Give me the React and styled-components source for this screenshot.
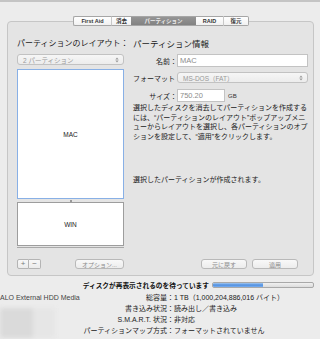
import React from "react"
import styled, { createGlobalStyle } from "styled-components"

/* Global page reset */
const GlobalStyle = createGlobalStyle`
  html, body {
    margin: 0;
    padding: 0;
  }
  body {
    width: 320px;
    height: 339px;
    overflow: hidden;
    background: #ececec;
    font-family: "Liberation Sans", "Noto Sans CJK JP", sans-serif;
    color: #222;
  }
`

const Window = styled.div`
  width: 320px;
  height: 339px;
  box-sizing: border-box;
  border-top: 2px solid #c4c4c4;
  padding-top: 14px;
  display: flex;
  flex-direction: column;
`

/* Tabs */
const TabStrip = styled.div`
  display: flex;
  margin-left: 73px;
  height: 10px;
  margin-bottom: -5px;
  position: relative;
  z-index: 1;
`

const Tab = styled.div`
  width: ${(p) => p.w}px;
  height: 10px;
  box-sizing: border-box;
  display: flex;
  align-items: center;
  justify-content: center;
  font-size: 5.5px;
  font-weight: bold;
  color: ${(p) => (p.active ? "#eeeeee" : "#333")};
  background: ${(p) =>
    p.active ? "linear-gradient(#959595, #828282)" : "linear-gradient(#ffffff, #f1f1f1)"};
  border-top: 1px solid #a6a6a6;
  border-bottom: 1px solid #a6a6a6;
  border-left: ${(p) => (p.first ? "1px solid #a6a6a6" : p.sep ? "1px solid #c8c8c8" : "none")};
  border-right: ${(p) => (p.last ? "1px solid #a6a6a6" : "none")};
  border-radius: ${(p) => (p.first ? "2px 0 0 2px" : p.last ? "0 2px 2px 0" : "0")};
  white-space: nowrap;
`

/* Group panel */
const Panel = styled.div`
  margin-left: 7px;
  width: 307px;
  height: 255px;
  box-sizing: border-box;
  border: 1px solid #c6c6c6;
  border-radius: 4px;
  background: #e4e4e4;
  padding: 17px 5px 6px 9px;
  display: grid;
  grid-template-columns: 107px 175px;
  column-gap: 9px;
`

const Column = styled.div`
  display: flex;
  flex-direction: column;
  min-height: 0;
`

const SectionLabel = styled.div`
  font-size: ${(p) => p.size || 8}px;
  line-height: 10px;
  height: 10px;
  color: #1a1a1a;
  white-space: nowrap;
`

const Popup = styled.div`
  height: ${(p) => p.h || 11}px;
  box-sizing: border-box;
  border: 1px solid #c2c2c2;
  border-radius: 3px;
  background: linear-gradient(#f6f6f6, #ececec);
  display: flex;
  align-items: center;
  justify-content: space-between;
  padding: 0 4px 0 5px;
  font-size: 6.5px;
  color: #999;
  margin-top: ${(p) => p.mt || 0}px;
  flex: ${(p) => (p.grow ? 1 : "none")};
`

const Arrows = () => (
  <svg width="4" height="6" viewBox="0 0 4 6">
    <path d="M0.3 2.4 L2 0.6 L3.7 2.4 Z M0.3 3.6 L2 5.4 L3.7 3.6 Z" fill="#9c9c9c" />
  </svg>
)

/* Partition map */
const Map = styled.div`
  margin-top: 4px;
  display: flex;
  flex-direction: column;
  border-bottom: 1px solid #a9a9a9;
  padding-bottom: 1px;
`

const Slice = styled.div`
  height: ${(p) => p.h}px;
  box-sizing: border-box;
  background: #fff;
  border: 1px solid ${(p) => (p.selected ? "#88b0e6" : "#9d9d9d")};
  display: flex;
  align-items: center;
  justify-content: center;
  font-size: 6.5px;
  color: #222;
`

const Splitter = styled.div`
  height: 3px;
  display: flex;
  justify-content: center;
  align-items: center;
  &::after {
    content: "";
    width: 2px;
    height: 2px;
    background: #999;
  }
`

const Spacer = styled.div`
  flex: 1;
`

const ButtonRow = styled.div`
  display: flex;
  align-items: center;
  justify-content: ${(p) => (p.end ? "flex-end" : "space-between")};
  gap: ${(p) => p.gap || 0}px;
  padding-right: ${(p) => p.pr || 0}px;
  height: 10px;
`

const Segmented = styled.div`
  display: flex;
`

const SegButton = styled.div`
  width: 12px;
  height: 10px;
  box-sizing: border-box;
  border: 1px solid #b4b4b4;
  border-left: ${(p) => (p.second ? "none" : "1px solid #b4b4b4")};
  border-radius: ${(p) => (p.second ? "0 2px 2px 0" : "2px 0 0 2px")};
  background: linear-gradient(#f7f7f7, #ebebeb);
  display: flex;
  align-items: center;
  justify-content: center;
  font-size: 8px;
  line-height: 1;
  color: #7c7c7c;
`

const PushButton = styled.div`
  width: ${(p) => p.w}px;
  height: 10px;
  box-sizing: border-box;
  border: 1px solid #b9b9b9;
  border-radius: 3px;
  background: linear-gradient(#f8f8f8, #ececec);
  display: flex;
  align-items: center;
  justify-content: center;
  font-size: 6px;
  color: #8a8a8a;
  white-space: nowrap;
`

/* Info form */
const FieldRow = styled.div`
  display: flex;
  align-items: center;
  margin-top: ${(p) => p.mt}px;
`

const FieldLabel = styled.div`
  width: 44px;
  flex: none;
  text-align: right;
  font-size: 7px;
  color: #1a1a1a;
  white-space: nowrap;
`

const TextField = styled.div`
  height: 13px;
  box-sizing: border-box;
  border: 1px solid #c3c3c3;
  background: #fff;
  display: flex;
  align-items: center;
  padding-left: 2px;
  font-size: 7.5px;
  color: #8c8c8c;
  width: ${(p) => (p.w ? `${p.w}px` : "auto")};
  flex: ${(p) => (p.w ? "none" : 1)};
`

const Unit = styled.div`
  font-size: 6px;
  margin-left: 3px;
  color: #333;
`

const Paragraph = styled.div`
  margin-top: ${(p) => p.mt}px;
  font-size: 7px;
  line-height: 9.5px;
  color: #1a1a1a;
  white-space: nowrap;
`

/* Bottom status area */
const StatusRow = styled.div`
  margin-top: 4px;
  height: 10px;
  display: flex;
  align-items: center;
  justify-content: flex-end;
  gap: 3px;
  padding-right: 6px;
`

const StatusText = styled.div`
  font-size: 6.7px;
  font-weight: bold;
  color: #111;
  white-space: nowrap;
`

const Progress = styled.div`
  width: 102px;
  height: 6px;
  box-sizing: border-box;
  border: 1px solid #a8a8a8;
  border-radius: 2px;
  background: linear-gradient(#f0f0f0, #dcdcdc);
  overflow: hidden;
`

const ProgressFill = styled.div`
  height: 100%;
  background: linear-gradient(#a6c8f0, #4f8fe0 50%, #7aaef0);
`

const Details = styled.div`
  margin-top: 2px;
  display: flex;
  flex: 1;
`

const DeviceCol = styled.div`
  width: 83px;
  flex: none;
  display: flex;
  flex-direction: column;
`

const DeviceName = styled.div`
  font-size: 7px;
  line-height: 11px;
  color: #444;
  white-space: nowrap;
`

const BlurIcon = styled.div`
  margin-top: 5px;
  width: 55px;
  height: 30px;
  background: linear-gradient(90deg, #dadada 0 33px, #e6e6e6 33px);
  filter: blur(2px);
`

const InfoGrid = styled.div`
  display: grid;
  grid-template-columns: 91px auto;
  grid-auto-rows: 11px;
  font-size: 7px;
  line-height: 11px;
  color: #1a1a1a;
  white-space: nowrap;
`

const InfoLabel = styled.div`
  text-align: right;
`

const info = [
  ["総容量：", "1 TB（1,000,204,886,016 バイト）"],
  ["書き込み状況：", "読み出し／書き込み"],
  ["S.M.A.R.T. 状況：", "非対応"],
  ["パーティションマップ方式：", "フォーマットされていません"],
]

export default function App() {
  return (
    <>
      <GlobalStyle />
      <Window>
        <TabStrip>
          <Tab w={38} first>First Aid</Tab>
          <Tab w={20} sep>消去</Tab>
          <Tab w={65} active>パーティション</Tab>
          <Tab w={27}>RAID</Tab>
          <Tab w={26} sep last>復元</Tab>
        </TabStrip>

        <Panel>
          <Column>
            <SectionLabel>パーティションのレイアウト：</SectionLabel>
            <Popup mt={5}>
              <span>2 パーティション</span>
              <Arrows />
            </Popup>
            <Map>
              <Slice h={130} selected>MAC</Slice>
              <Splitter />
              <Slice h={44}>WIN</Slice>
            </Map>
            <Spacer />
            <ButtonRow>
              <Segmented>
                <SegButton>+</SegButton>
                <SegButton second>−</SegButton>
              </Segmented>
              <PushButton w={49}>オプション...</PushButton>
            </ButtonRow>
          </Column>

          <Column>
            <SectionLabel size={8.5}>パーティション情報</SectionLabel>
            <FieldRow mt={5}>
              <FieldLabel>名前：</FieldLabel>
              <TextField>MAC</TextField>
            </FieldRow>
            <FieldRow mt={5}>
              <FieldLabel>フォーマット：</FieldLabel>
              <Popup grow>
                <span>MS-DOS（FAT）</span>
                <Arrows />
              </Popup>
            </FieldRow>
            <FieldRow mt={6}>
              <FieldLabel>サイズ：</FieldLabel>
              <TextField w={48}>750.20</TextField>
              <Unit>GB</Unit>
            </FieldRow>
            <Paragraph mt={1}>
              選択したディスクを消去してパーティションを作成する
              <br />
              には、“パーティションのレイアウト”ポップアップメニ
              <br />
              ューからレイアウトを選択し、各パーティションのオプ
              <br />
              ションを設定して、“適用”をクリックします。
            </Paragraph>
            <Paragraph mt={34}>選択したパーティションが作成されます。</Paragraph>
            <Spacer />
            <ButtonRow end gap={5} pr={10}>
              <PushButton w={46}>元に戻す</PushButton>
              <PushButton w={46}>適用</PushButton>
            </ButtonRow>
          </Column>
        </Panel>

        <StatusRow>
          <StatusText>ディスクが再表示されるのを待っています</StatusText>
          <Progress>
            <ProgressFill style={{ width: "50%" }} />
          </Progress>
        </StatusRow>

        <Details>
          <DeviceCol>
            <DeviceName>ALO External HDD Media</DeviceName>
            <BlurIcon />
          </DeviceCol>
          <InfoGrid>
            {info.map(([label, value]) => (
              <React.Fragment key={label}>
                <InfoLabel>{label}</InfoLabel>
                <div>{value}</div>
              </React.Fragment>
            ))}
          </InfoGrid>
        </Details>
      </Window>
    </>
  )
}
